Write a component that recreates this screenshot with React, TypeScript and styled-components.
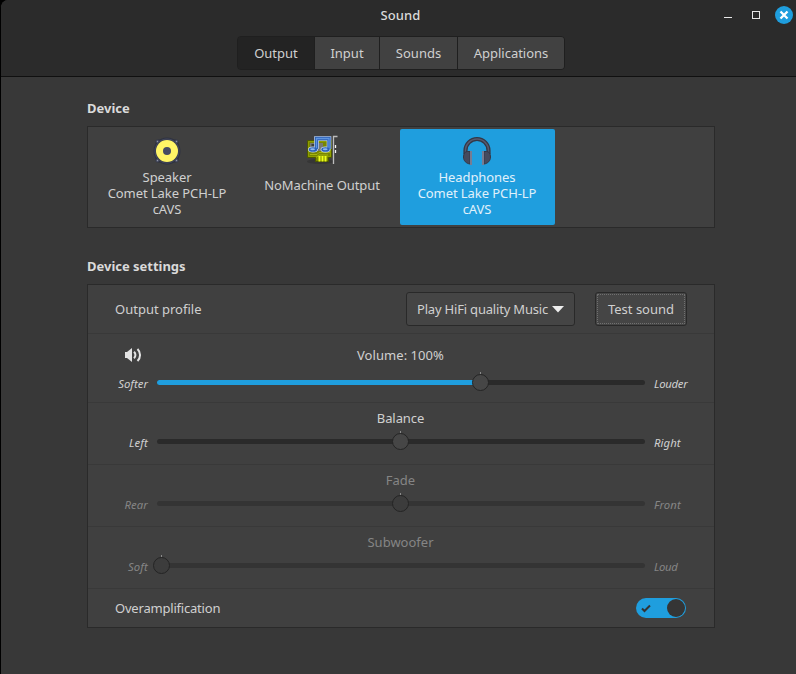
import React from 'react';
import styled, { createGlobalStyle, css } from 'styled-components';

const GlobalStyle = createGlobalStyle`
  * { box-sizing: border-box; }
  html, body { margin: 0; background: #000; }
  body { font: 13px/16px "Noto Sans", sans-serif; color: #d0d0d0; overflow: hidden; }
  button { font: inherit; color: inherit; margin: 0; padding: 0; }
  svg { display: block; flex: none; }
`;

const Window = styled.div`
  width: 796px;
  height: 674px;
  border-left: 1px solid #000;
  background: #383838;
  border-top-left-radius: 8px;
  overflow: hidden;
`;

const Header = styled.header`
  height: 77px;
  background: #2b2b2b;
  border-bottom: 1px solid #101010;
`;

const TitleBar = styled.div`
  display: grid;
  grid-template-columns: 1fr auto 1fr;
  align-items: center;
  height: 30px;
  padding: 0 3px;
`;

const Title = styled.h1`
  grid-column: 2;
  margin: 0 0 0 4px;
  font-size: 13px;
  font-weight: 500;
  color: #dadada;
  letter-spacing: 0.1px;
`;

const WindowControls = styled.div`
  display: flex;
  justify-content: flex-end;
`;

const TabStrip = styled.nav`
  display: flex;
  width: 328px;
  height: 34px;
  margin: 6px 0 0 236px;
  border: 1px solid #1f1f1f;
  border-radius: 4px;
  overflow: hidden;
`;

const Tab = styled.button<{ $width: number; $active?: boolean }>`
  width: ${(p) => p.$width}px;
  border: 0;
  border-left: ${(p) => (p.$active ? '0' : '1px solid #1f1f1f')};
  background: ${(p) => (p.$active ? '#232323' : '#414141')};
`;

const Content = styled.main`
  padding: 23px 81px 0 86px;
`;

const SectionTitle = styled.h2<{ $gap?: number }>`
  margin: ${(p) => p.$gap ?? 0}px 0 10px;
  font-size: 13px;
  line-height: 16px;
  font-weight: 700;
  color: #dadada;
  letter-spacing: -0.02px;
`;

const Panel = styled.section`
  width: 628px;
  border: 1px solid #2a2a2a;
  background: #404040;
`;

const DeviceList = styled(Panel)`
  display: flex;
  height: 102px;
  padding: 2px;
`;

const Device = styled.div<{ $active?: boolean }>`
  display: flex;
  flex-direction: column;
  align-items: center;
  width: 155px;
  height: 96px;
  padding: 5px 1px 0 0;
  border-radius: 2px;
  text-align: center;
  ${(p) =>
    p.$active &&
    css`
      background: #1f9ede;
      color: #e0f1fb;
    `}
`;

const DeviceName = styled.div<{ $offset?: number }>`
  width: 126px;
  margin-top: ${(p) => p.$offset ?? 3}px;
  letter-spacing: -0.08px;
`;

const row = css`
  border-bottom: 1px solid #393939;
  &:last-child { border-bottom: 0; }
`;

const OptionRow = styled.div<{ $height: number }>`
  display: flex;
  align-items: center;
  height: ${(p) => p.$height}px;
  padding: 0 27px;
  ${row}
`;

const OptionLabel = styled.span<{ $track?: number }>`
  flex: 1;
  letter-spacing: ${(p) => p.$track ?? 0}px;
`;

const PushButton = styled.button<{ $width: number; $focused?: boolean }>`
  display: flex;
  align-items: center;
  justify-content: center;
  gap: 4px;
  width: ${(p) => p.$width}px;
  height: 34px;
  border: 1px solid #292929;
  border-radius: 3px;
  background: #454545;
  white-space: nowrap;
  ${(p) =>
    p.$focused &&
    css`
      margin-left: 20px;
      outline: 1px dotted #707070;
      outline-offset: -3px;
    `}
`;

const ProfileText = styled.span`
  letter-spacing: -0.19px;
`;

const SliderRow = styled.div<{ $height: number; $disabled?: boolean }>`
  display: grid;
  grid-template-columns: 60px 488px 1fr;
  grid-template-rows: 16px 17px;
  column-gap: 9px;
  row-gap: ${(p) => (p.$height > 62 ? 11 : 7)}px;
  align-items: center;
  height: ${(p) => p.$height}px;
  padding-top: ${(p) => (p.$height > 62 ? 13 : 7)}px;
  color: ${(p) => (p.$disabled ? '#858585' : '#d0d0d0')};
  ${row}
`;

const IconCell = styled.div`
  padding-left: 36px;
`;

const SliderTitle = styled.div<{ $track?: number }>`
  grid-column: 2;
  padding-right: 1px;
  text-align: center;
  letter-spacing: ${(p) => p.$track ?? 0}px;
`;

const EndLabel = styled.span<{ $start?: boolean; $track: number }>`
  padding-top: 3px;
  font-size: 11.3px;
  font-style: italic;
  line-height: 16px;
  letter-spacing: ${(p) => p.$track}px;
  text-align: ${(p) => (p.$start ? 'right' : 'left')};
`;

const Track = styled.div<{ $disabled?: boolean }>`
  position: relative;
  height: 5px;
  border-radius: 3px;
  background: ${(p) => (p.$disabled ? '#343434' : '#2a2a2a')};
`;

const Fill = styled.div`
  height: 5px;
  border-radius: 3px;
  background: #1f9ede;
`;

const Knob = styled.div<{ $disabled?: boolean }>`
  position: absolute;
  top: -6px;
  width: 17px;
  height: 17px;
  border: 1px solid #242424;
  border-radius: 50%;
  background: ${(p) => (p.$disabled ? '#3c3c3c' : '#464646')};
  &::before {
    content: '';
    position: absolute;
    top: -3px;
    left: 7px;
    width: 1px;
    height: 2px;
    background: #8c8c8c;
  }
`;

const Toggle = styled.button`
  display: flex;
  align-items: center;
  justify-content: space-between;
  width: 50px;
  height: 20px;
  margin-right: 1px;
  padding: 0 1px 0 5px;
  border: 0;
  border-radius: 10px;
  background: #1f9ede;
`;

const ToggleKnob = styled.span`
  width: 18px;
  height: 18px;
  border-radius: 50%;
  background: #353535;
`;

const SpeakerIcon = () => (
  <svg width="32" height="32" viewBox="0 0 32 32">
    <circle cx="16" cy="17" r="13.500" fill="#2f3241" />
    <rect x="4.500" y="5.500" width="23" height="23" rx="2" fill="#2f3241" />
    <circle cx="16" cy="17" r="12.500" fill="#454a5e" />
    {[[6.5, 7.5], [25.5, 7.5], [6.5, 26.5], [25.5, 26.5]].map(([x, y]) => (
      <React.Fragment key={`${x}-${y}`}>
        <circle cx={x} cy={y} r="1.700" fill="#454a5e" />
        <circle cx={x} cy={y} r=".7" fill="#8d91a2" />
      </React.Fragment>
    ))}
    <circle cx="16" cy="17" r="11.600" fill="#343746" />
    <circle cx="16" cy="17" r="11" fill="#fff566" />
    <circle cx="16" cy="17" r="4" fill="#464b62" />
  </svg>
);

const SoundCardIcon = () => (
  <svg width="32" height="32" viewBox="0 0 32 32">
    <ellipse cx="14" cy="27.500" rx="13" ry="2.500" fill="#2c2c2c" opacity=".5" />
    <path d="M1.500 6.500h24v17h-3v4h-13v-4h-8z" fill="#788600" stroke="#4d5700" />
    <path d="M2.500 7.500h22v15h-22z" fill="none" stroke="#8f9f00" />
    <path d="M4 9h13v8H4z" fill="#777a70" />
    <path d="M5.500 10h6v5h-6z" fill="#3b3e38" />
    <path d="M4 20.500h7l2-2h11M10 23.500l3-2.500h9" fill="none" stroke="#a6b40f" />
    <path d="M13.500 22v5.500M16.500 22v5.500M19.500 22v5.500" stroke="#efff1b" strokeWidth="2" />
    <g fill="none" stroke="#c9daf2">
      <path d="M10.500 15V4.500h12.500V15" strokeWidth="4.600" />
      <ellipse cx="7" cy="15.500" rx="4.200" ry="2.300" strokeWidth="1.500" />
      <ellipse cx="19.500" cy="15.500" rx="4.200" ry="2.300" strokeWidth="1.500" />
    </g>
    <path d="M10.500 15V4.500h12.500V15" fill="none" stroke="#2c61b6" strokeWidth="3.300" />
    <path d="M10.500 15V4.500h12.500V15" fill="none" stroke="#5f95e0" strokeWidth="1.300" />
    <ellipse cx="7" cy="15.500" rx="4.200" ry="2.300" fill="#2c61b6" />
    <ellipse cx="19.500" cy="15.500" rx="4.200" ry="2.300" fill="#2c61b6" />
    <ellipse cx="6.600" cy="15.200" rx="2.400" ry="1" fill="#8eb9f2" />
    <ellipse cx="19.200" cy="15.200" rx="2.400" ry="1" fill="#8eb9f2" />
    <path d="M31.500 2.500H27.500v27.500" fill="none" stroke="#bdbdbd" strokeWidth="1.300" />
    <path d="M29.500 11v3M29.500 16v3" stroke="#f3f3f3" strokeWidth="1.300" />
  </svg>
);

const HeadphonesIcon = () => (
  <svg width="32" height="32" viewBox="0 0 32 32">
    <path d="M4.500 20v-3.500a11.500 11.500 0 0 1 23 0V20" fill="none" stroke="#343746" strokeWidth="4.200" />
    <path d="M4.500 19v-2.500a11.500 11.500 0 0 1 23 0V19" fill="none" stroke="#555a70" strokeWidth="1.500" />
    <path d="M9 17.500H6.500c-2.400 0-4 2-4 5.500 0 3.700 2.600 6.500 6.500 7z" fill="#454a5e" stroke="#343746" />
    <path d="M23 17.500h2.500c2.400 0 4 2 4 5.500 0 3.700-2.600 6.500-6.500 7z" fill="#454a5e" stroke="#343746" />
    <path d="M9 17h2v14H9zM21 17h2v14h-2z" fill="#767c93" />
  </svg>
);

const VolumeIcon = () => (
  <svg width="18" height="16" viewBox="0 0 18 16" fill="none">
    <path d="M1 5h2L8 1v14L3 11H1z" fill="#e3e3e3" />
    <path d="M10 4.800c1.900 1.800 1.900 4.600 0 6.400" stroke="#e3e3e3" strokeWidth="2" />
    <path d="M13.500 2c3.400 3.400 3.400 8.600 0 12" stroke="#e3e3e3" strokeWidth="2" />
  </svg>
);

const ControlIcons = () => (
  <svg width="74" height="20" viewBox="0 0 74 20" fill="none">
    <path d="M5 12.500h8" stroke="#e8e8e8" />
    <rect x="33.500" y="6.500" width="7" height="7" stroke="#e8e8e8" />
    <circle cx="65" cy="10" r="9" fill="#1f9ede" />
    <path d="M61.500 6.500l7 7M68.500 6.500l-7 7" stroke="#fff" strokeWidth="2.300" />
  </svg>
);

type SliderProps = {
  title: string;
  titleTrack?: number;
  low: string;
  lowTrack?: number;
  high: string;
  highTrack?: number;
  position: number;
  filled?: boolean;
  disabled?: boolean;
  height?: number;
  icon?: React.ReactNode;
};

const Slider = ({
  title, titleTrack, low, lowTrack = 0.15, high, highTrack = 0.1,
  position, filled, disabled, height = 62, icon,
}: SliderProps) => (
  <SliderRow $height={height} $disabled={disabled}>
    <IconCell>{icon}</IconCell>
    <SliderTitle $track={titleTrack}>{title}</SliderTitle>
    <span />
    <EndLabel $start $track={lowTrack}>{low}</EndLabel>
    <Track $disabled={disabled}>
      {filled && <Fill style={{ width: position }} />}
      <Knob $disabled={disabled} style={{ left: position - 8 }} />
    </Track>
    <EndLabel $track={highTrack}>{high}</EndLabel>
  </SliderRow>
);

export default function App() {
  return (
    <>
      <GlobalStyle />
      <Window>
        <Header>
          <TitleBar>
            <Title>Sound</Title>
            <WindowControls>
              <ControlIcons />
            </WindowControls>
          </TitleBar>
          <TabStrip>
            <Tab $width={76} $active>Output</Tab>
            <Tab $width={65}>Input</Tab>
            <Tab $width={78}>Sounds</Tab>
            <Tab $width={107}>Applications</Tab>
          </TabStrip>
        </Header>
        <Content>
          <SectionTitle>Device</SectionTitle>
          <DeviceList>
            <Device>
              <SpeakerIcon />
              <DeviceName>Speaker<br />Comet Lake PCH-LP<br />cAVS</DeviceName>
            </Device>
            <Device>
              <SoundCardIcon />
              <DeviceName $offset={11}>NoMachine Output</DeviceName>
            </Device>
            <Device $active>
              <HeadphonesIcon />
              <DeviceName>Headphones<br />Comet Lake PCH-LP<br />cAVS</DeviceName>
            </Device>
          </DeviceList>
          <SectionTitle $gap={30}>Device settings</SectionTitle>
          <Panel>
            <OptionRow $height={49}>
              <OptionLabel>Output profile</OptionLabel>
              <PushButton $width={169}>
                <ProfileText>Play HiFi quality Music</ProfileText>
                <svg width="12" height="7" viewBox="0 0 12 7">
                  <path d="M0 0h12L6 6.500z" fill="#eee" />
                </svg>
              </PushButton>
              <PushButton $width={92} $focused>Test sound</PushButton>
            </OptionRow>
            <Slider
              title="Volume: 100%" titleTrack={0.06} low="Softer" lowTrack={0.05}
              high="Louder" highTrack={-0.25} position={323} filled height={69} icon={<VolumeIcon />}
            />
            <Slider title="Balance" titleTrack={-0.08} low="Left" high="Right" position={243} />
            <Slider title="Fade" low="Rear" high="Front" position={243} disabled />
            <Slider title="Subwoofer" low="Soft" high="Loud" highTrack={-0.35} position={4} disabled />
            <OptionRow $height={38}>
              <OptionLabel $track={-0.2}>Overamplification</OptionLabel>
              <Toggle aria-label="Overamplification">
                <svg width="10" height="9" viewBox="0 0 10 9">
                  <path d="M1 4.500l2.500 2.500L9 1.500" fill="none" stroke="#333" strokeWidth="2" />
                </svg>
                <ToggleKnob />
              </Toggle>
            </OptionRow>
          </Panel>
        </Content>
      </Window>
    </>
  );
}
